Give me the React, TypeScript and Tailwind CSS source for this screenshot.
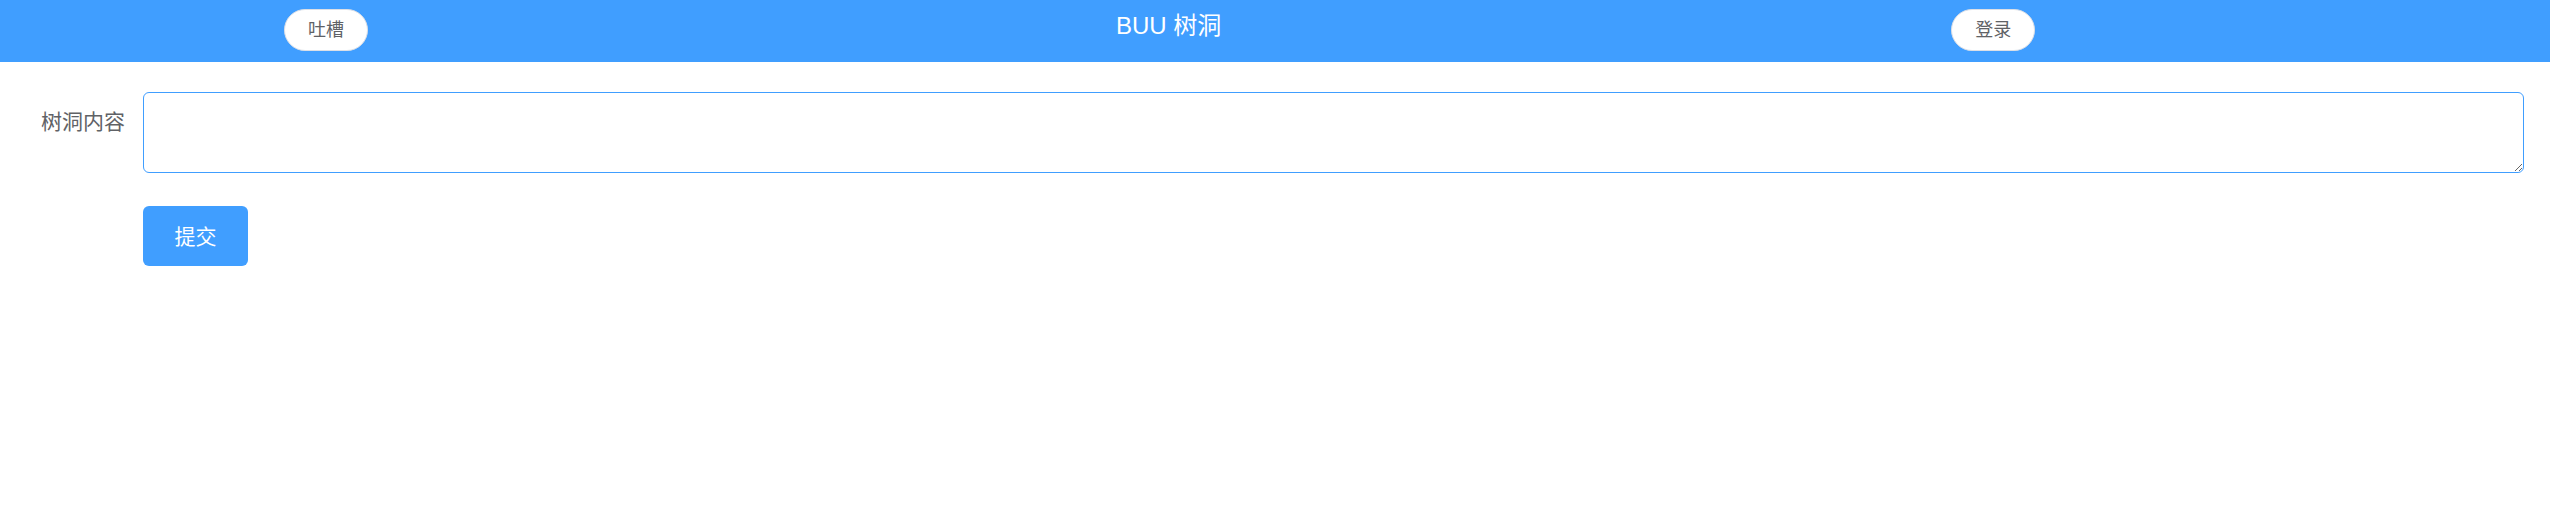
import { useState } from "react";

const font = "font-['Liberation_Sans','Noto_Sans_CJK_SC',sans-serif]";

function PillButton({ label }: { label: string }) {
  return (
    <button
      type="button"
      className="h-[42px] w-[84px] rounded-full border-[1.5px] border-[#dcdfe6] bg-white text-[18px] leading-none text-[#606266]"
    >
      {label}
    </button>
  );
}

export default function App() {
  const [content, setContent] = useState("");

  return (
    <div className={`min-h-[524px] bg-white ${font}`}>
      <header className="flex h-[62px] items-start bg-[#409eff]">
        <div className="ml-[284px] mt-[9px]">
          <PillButton label="吐槽" />
        </div>
        <h1 className="ml-[748px] mt-[11px] text-[24px] leading-[30px] font-normal text-white">
          BUU 树洞
        </h1>
        <div className="ml-[730px] mt-[9px]">
          <PillButton label="登录" />
        </div>
      </header>

      <form
        className="pt-[30px] pr-[26px]"
        onSubmit={(e) => e.preventDefault()}
      >
        <div className="mb-[33px] flex items-start">
          <label className="w-[143px] shrink-0 pr-[18px] text-right text-[21px] leading-[60px] text-[#606266]">
            树洞内容
          </label>
          <textarea
            rows={2}
            value={content}
            onChange={(e) => setContent(e.target.value)}
            className="block h-[81px] flex-1 rounded-[6px] border-[1.5px] border-[#409eff] px-[22px] py-[7px] text-[21px] leading-[1.5] text-[#606266] outline-none"
          />
        </div>
        <div className="pl-[143px]">
          <button
            type="submit"
            className="h-[60px] w-[105px] rounded-[6px] bg-[#409eff] text-[21px] leading-none text-white"
          >
            提交
          </button>
        </div>
      </form>
    </div>
  );
}
